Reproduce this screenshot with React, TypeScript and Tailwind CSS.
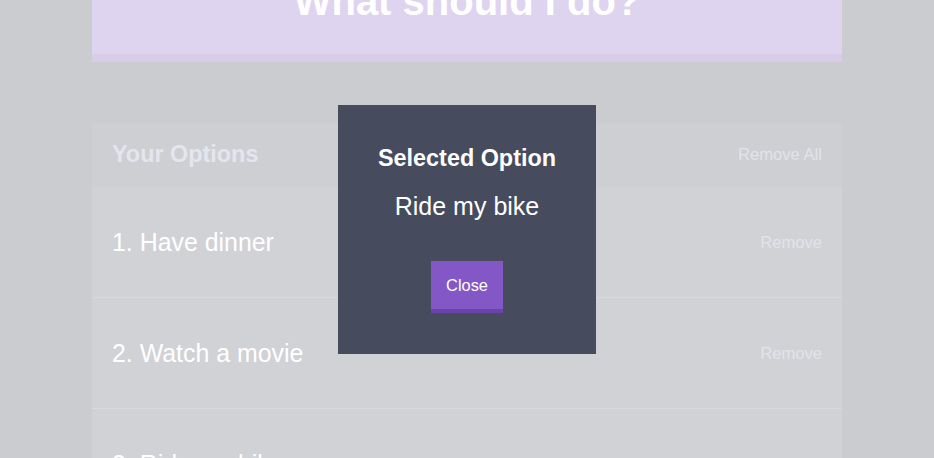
// Indecision app, scrolled slightly, with the "Selected Option" modal open.
const OPTIONS = ["Have dinner", "Watch a movie", "Ride my bike"];

export default function App() {
  return (
    <div
      className="relative h-[458px] overflow-hidden bg-[#cbccd0]"
      style={{ fontFamily: '"Liberation Sans", Arial, sans-serif' }}
    >
      <div className="mx-auto w-[750px]">
        {/* big action button, partly scrolled out of view */}
        <button className="-mt-[52px] block w-full border-b-[8px] border-[#d8cce8] bg-[#dfd4f0] pb-[33px] pt-[33px] text-[40px] font-bold leading-none text-white">
          What should I do?
        </button>

        {/* options widget */}
        <div className="mt-[61px]">
          <div className="flex h-[64px] items-center justify-between bg-[#cecfd3] px-5">
            <h3 className="text-[23.4px] font-bold text-[#e4e5ee]">Your Options</h3>
            <button className="text-[16.6px] text-[#e2e3ea]">Remove All</button>
          </div>
          {OPTIONS.map((o, i) => (
            <div
              key={o}
              className="flex h-[111px] items-center justify-between border-b border-[#d8d9dd] bg-[#d1d2d6] px-5"
            >
              <p className="pt-[2px] text-[24.9px] text-white">
                {i + 1}. {o}
              </p>
              <button className="pt-[2px] text-[16.6px] text-[#e2e3ea]">Remove</button>
            </div>
          ))}
        </div>
      </div>

      {/* modal */}
      <div className="absolute left-[338px] top-[105px] flex h-[249px] w-[258px] flex-col items-center bg-[#464b5e] pt-[42px] text-white">
        <h3 className="text-[23.4px] font-bold leading-[23px]">Selected Option</h3>
        <p className="mt-[24px] text-[25px] leading-[25px]">Ride my bike</p>
        <button className="mt-[42px] flex h-[52px] w-[72px] items-center justify-center border-b-[4px] border-[#6b41ab] bg-[#8357c5] pt-[1px] text-[16.4px] text-white">
          Close
        </button>
      </div>
    </div>
  );
}
